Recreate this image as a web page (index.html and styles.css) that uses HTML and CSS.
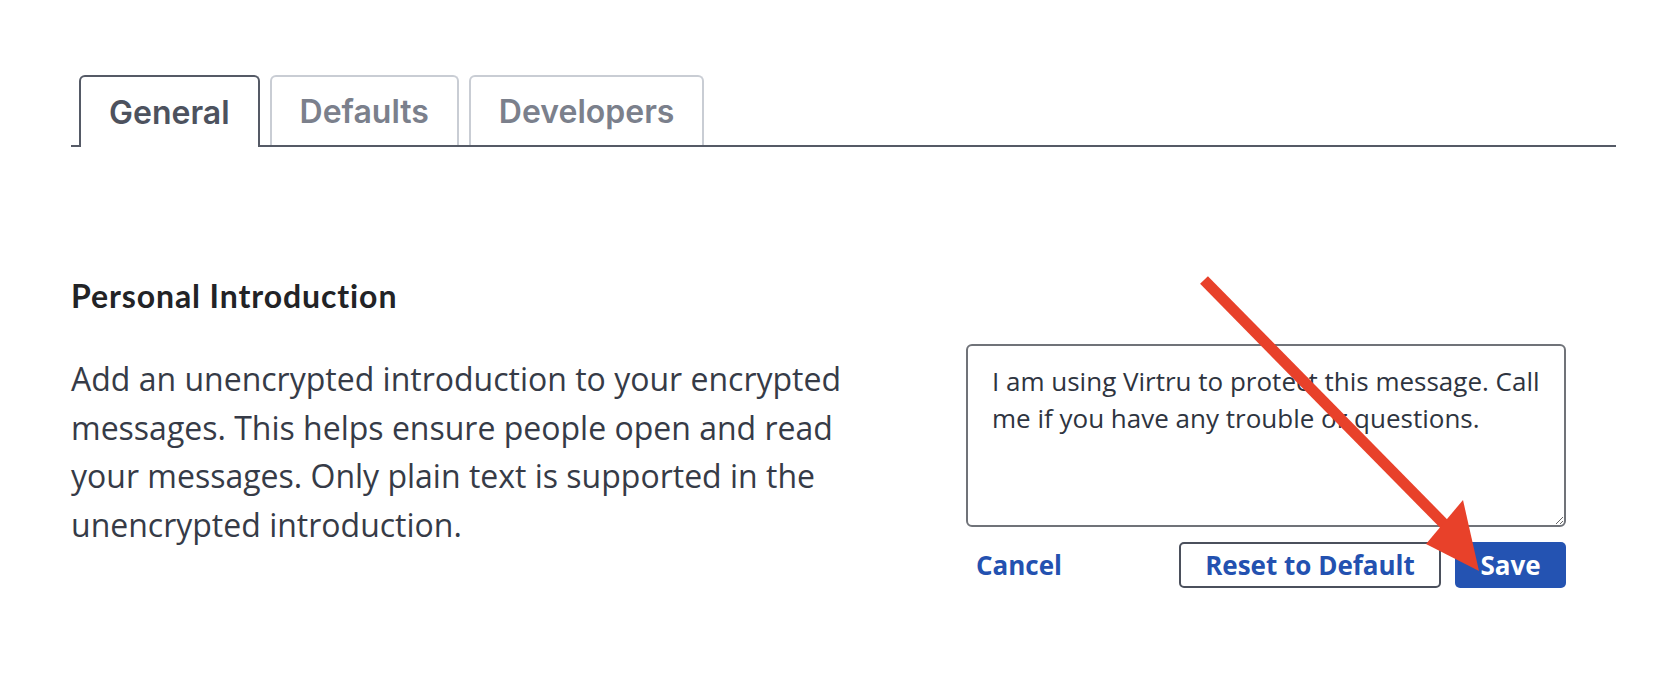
FILE: index.html
```html
<!DOCTYPE html>
<html lang="en">
<head>
<meta charset="utf-8">
<title>Settings</title>
<link rel="stylesheet" href="styles.css">
</head>
<body>
<div class="page">
  <nav class="tabs">
    <div class="tab tab-active">General</div>
    <div class="tab">Defaults</div>
    <div class="tab">Developers</div>
  </nav>
  <section class="section">
    <h2 class="section-title">Personal Introduction</h2>
    <div class="row">
      <p class="desc">Add an unencrypted introduction to your encrypted messages. This helps ensure people open and read your messages. Only plain text is supported in the unencrypted introduction.</p>
      <div class="editor">
        <textarea class="intro">I am using Virtru to protect this message. Call me if you have any trouble or questions.</textarea>
        <div class="actions">
          <button class="btn btn-link">Cancel</button>
          <div class="actions-right">
            <button class="btn btn-outline">Reset to Default</button>
            <button class="btn btn-primary">Save</button>
          </div>
        </div>
      </div>
    </div>
  </section>
</div>
<svg class="arrow" width="1654" height="676" viewBox="0 0 1654 676" xmlns="http://www.w3.org/2000/svg">
  <line x1="1204" y1="280" x2="1448" y2="528" stroke="#e8412a" stroke-width="11"/>
  <polygon points="1479,571 1426,544 1463,500" fill="#e8412a"/>
</svg>
</body>
</html>
```
FILE: styles.css
```css
html, body {
  margin: 0;
  padding: 0;
  background: #ffffff;
}
body {
  position: relative;
  width: 1654px;
  height: 676px;
  overflow: hidden;
  font-family: "Open Sans", "Noto Sans", sans-serif;
}
.page {
  padding: 75px 38px 0 71px;
}
.tabs {
  display: flex;
  gap: 10px;
  padding-left: 8px;
  border-bottom: 2px solid #555a66;
}
.tab {
  height: 68px;
  display: flex;
  align-items: center;
  padding: 0 28px;
  border: 2px solid #c9cdd4;
  border-bottom: none;
  border-radius: 6px 6px 0 0;
  font-family: Inter, "Noto Sans", sans-serif;
  font-weight: 600;
  font-size: 32px;
  color: #7b808c;
}
.tab-active {
  border-color: #555a66;
  color: #4d525e;
  height: 70px;
  margin-bottom: -2px;
  background: #fff;
}
.section-title {
  margin: 131px 0 0 0;
  font-family: Lato, "Noto Sans", sans-serif;
  font-weight: 700;
  font-size: 32px;
  letter-spacing: 0.9px;
  line-height: 36px;
  color: #222326;
}
.row {
  display: flex;
  align-items: flex-start;
  gap: 95px;
  margin-top: 30px;
}
.desc {
  width: 800px;
  margin: 11px 0 0 0;
  font-size: 32px;
  line-height: 48.5px;
  color: #363b47;
}
.editor {
  width: 600px;
  display: flex;
  flex-direction: column;
}
.intro {
  box-sizing: border-box;
  width: 600px;
  height: 183px;
  margin: 0;
  padding: 17px 18px 0 24px;
  border: 2px solid #707379;
  border-radius: 6px;
  font-family: "Open Sans", "Noto Sans", sans-serif;
  font-size: 26px;
  line-height: 37px;
  color: #2e3440;
  overflow: hidden;
  outline: none;
}
.actions {
  display: flex;
  justify-content: space-between;
  align-items: center;
  margin-top: 15px;
}
.actions-right {
  display: flex;
  gap: 14px;
}
.btn {
  box-sizing: border-box;
  height: 46px;
  margin: 0;
  font-family: "Open Sans", "Noto Sans", sans-serif;
  font-weight: 700;
  font-size: 26px;
  border-radius: 5px;
  cursor: pointer;
}
.btn-link {
  background: transparent;
  border: none;
  padding: 0 10px;
  color: #2351b0;
}
.btn-outline {
  width: 262px;
  background: #ffffff;
  border: 2px solid #4b505c;
  color: #2351b0;
}
.btn-primary {
  width: 111px;
  background: #2453b2;
  border: none;
  color: #ffffff;
}
.arrow {
  position: absolute;
  left: 0;
  top: 0;
  pointer-events: none;
}
```
